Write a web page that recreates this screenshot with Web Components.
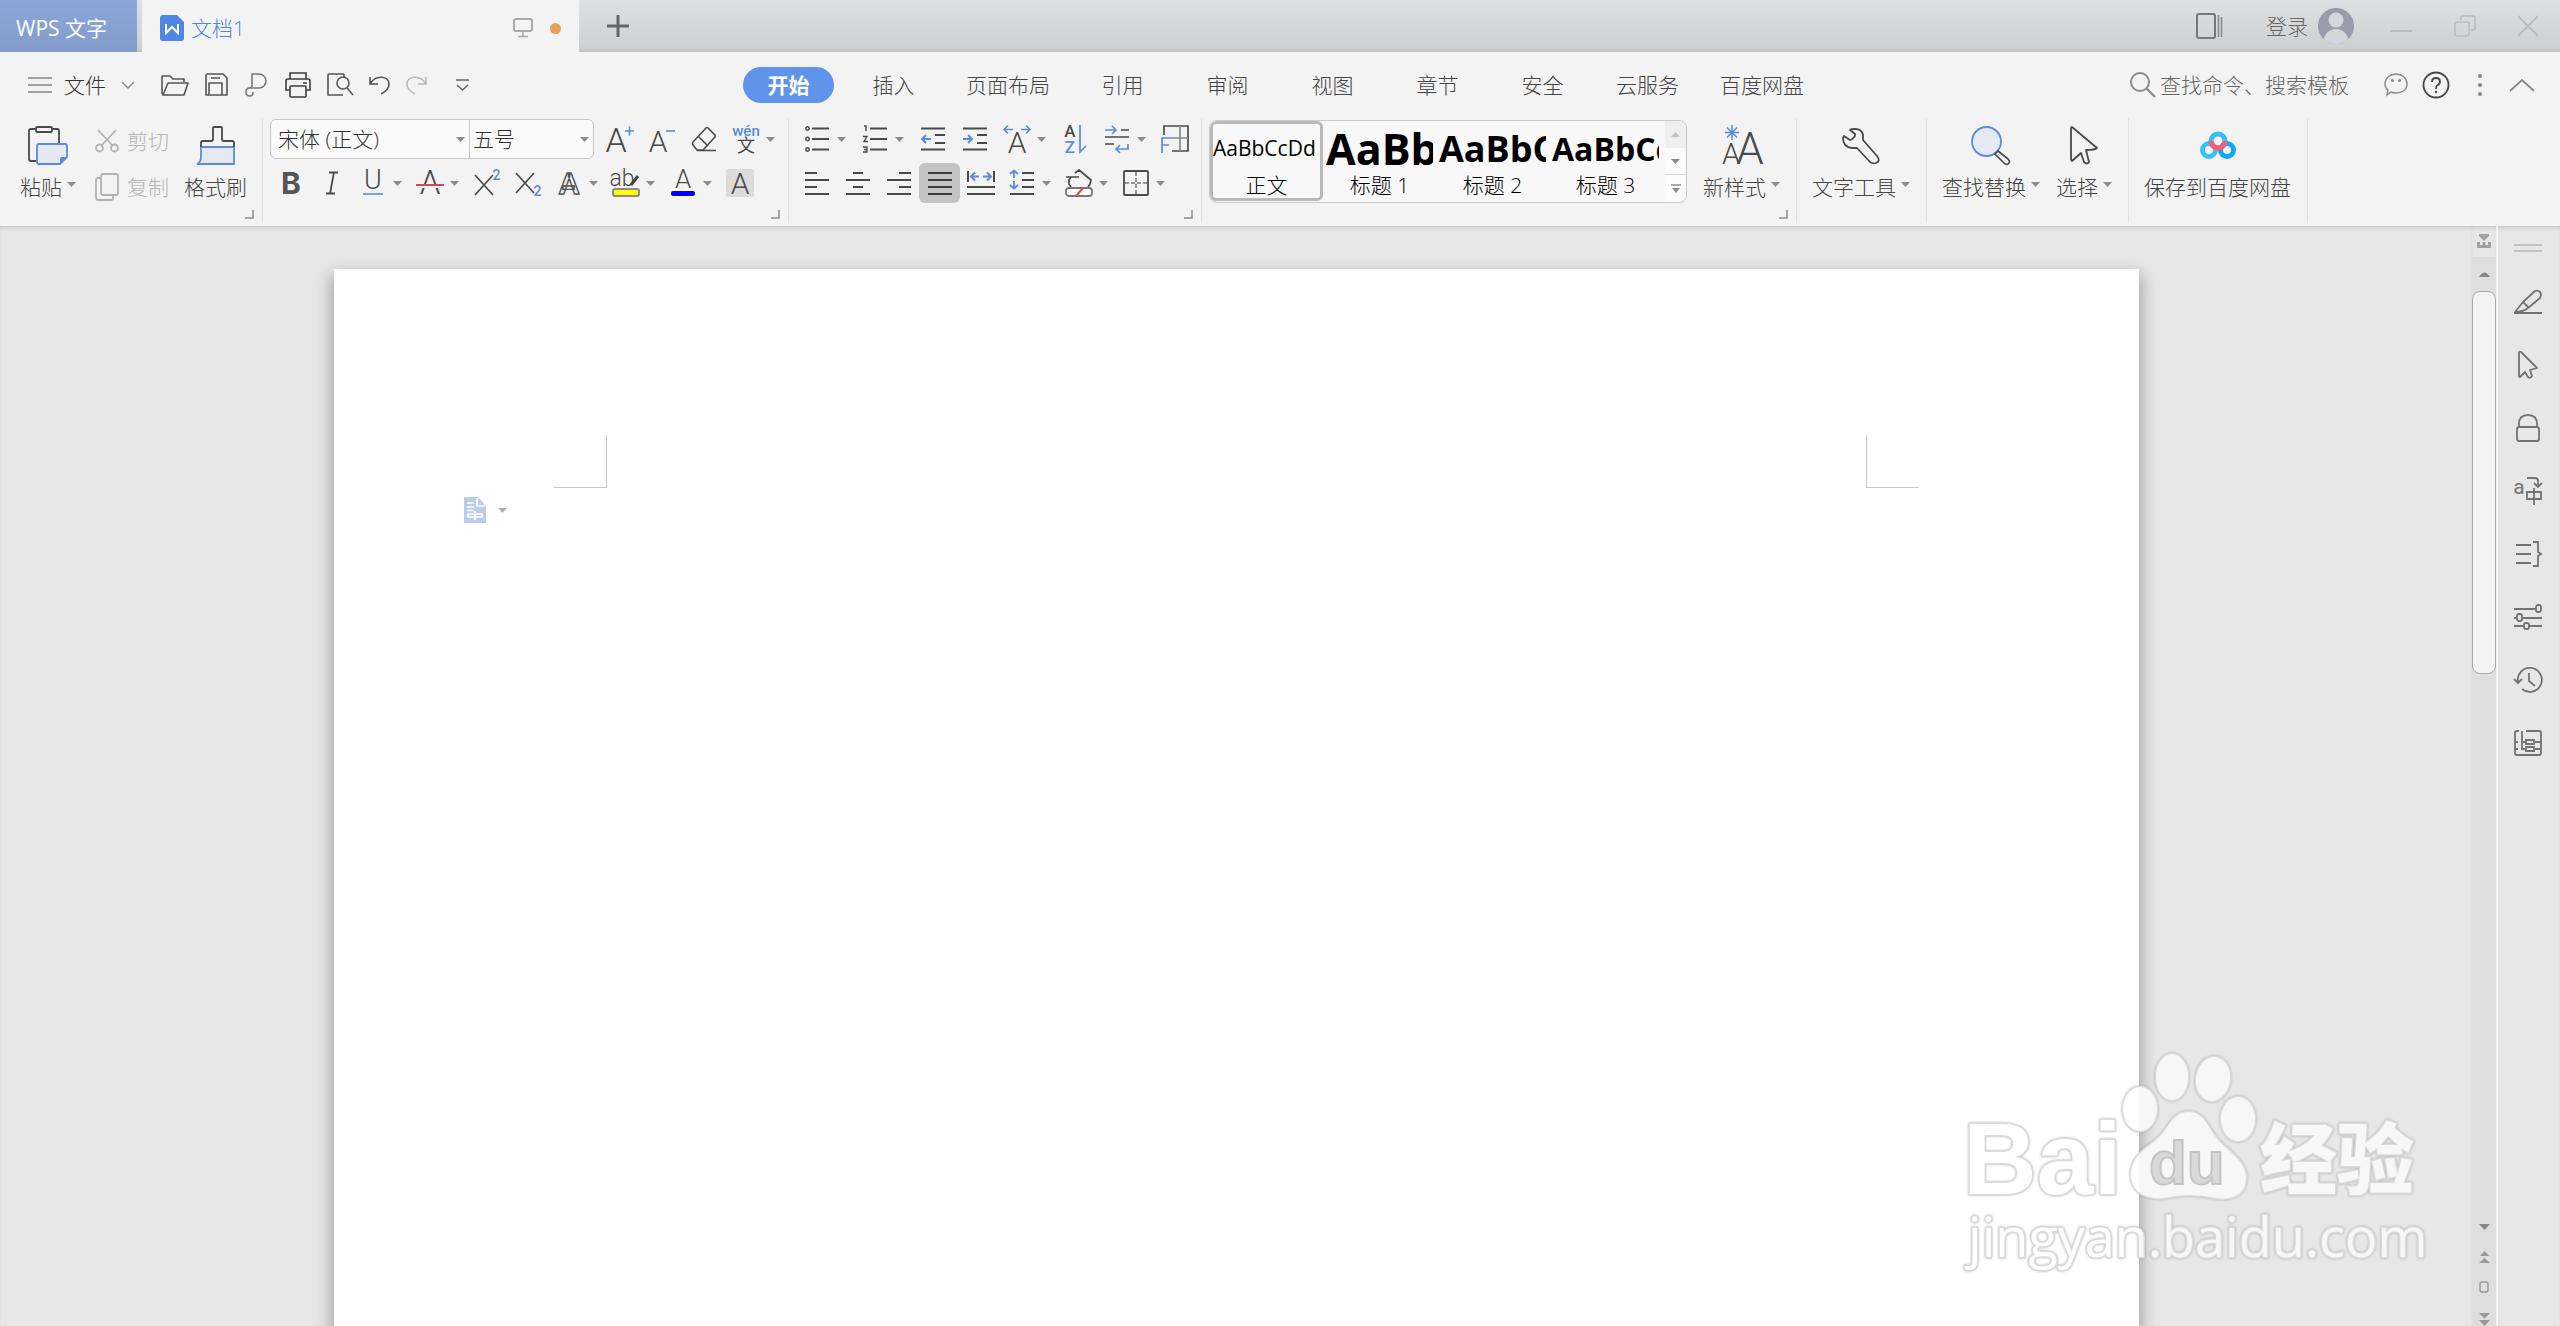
<!DOCTYPE html>
<html lang="zh-CN">
<head>
<meta charset="utf-8">
<title>文档1 - WPS 文字</title>
<style>
  html, body { margin: 0; height: 100%; }
  body {
    overflow: hidden;
    background: #e7e7e7;
    color: #444;
    font: 300 21px/28px "Open Sans", "Noto Sans CJK SC", sans-serif;
  }
</style>
</head>
<body>
<wps-app></wps-app>
<script>
const INK = '#4a4a4a', BLUE = '#5a8bdc';
const ln = (d, c = INK, w = 2, extra = '') => `<path d="${d}" fill="none" stroke="${c}" stroke-width="${w}" ${extra}/>`;
const tx = (x, y, size, s, c = INK, extra = '') => `<text x="${x}" y="${y}" font-size="${size}" fill="${c}" ${extra}>${s}</text>`;
const THIN = 'font-family="Roboto" font-weight="300" text-anchor="middle"';

/* name: [width, height, markup] */
const ICONS = {
  drop: [9, 5, '<path d="M0 0H9L4.500 5Z" fill="#8c8c8c"/>'],
  dropUp: [9, 5, '<path d="M0 5H9L4.500 0Z" fill="#c0c0c0"/>'],
  dropMore: [10, 9, '<path d="M0 1H10" stroke="#8c8c8c" stroke-width="1.500"/><path d="M1 4H9L5 9Z" fill="#8c8c8c"/>'],
  launcher: [9, 9, ln('M8 0V8H0', '#8c8c8c', 1.5)],
  wdoc: [24, 26, '<path d="M3 0H17L24 7V23Q24 26 21 26H3Q0 26 0 23V3Q0 0 3 0Z" fill="#4f86e4"/>' + ln('M6 9V18L12 12L18 18V9', '#fff', 2)],
  monitor: [20, 20, '<rect x="1" y="1" width="18" height="12" rx="2" fill="none" stroke="#aaa" stroke-width="2"/>' + ln('M10 13V18M5 18.500H15', '#aaa', 1.5)],
  plus: [22, 22, ln('M0 11H22M11 0V22', '#666', 3)],
  panels: [27, 26, '<rect x="1" y="1" width="18" height="24" rx="2" fill="none" stroke="#777" stroke-width="2"/>' + ln('M22.500 2V24M25.500 4V24', '#888', 1.5)],
  avatar: [36, 36, '<clipPath id="c"><circle cx="18" cy="18" r="18"/></clipPath><g clip-path="url(#c)"><rect width="36" height="36" fill="#9a9bac"/><circle cx="18" cy="12" r="7.500" fill="#d5d6dd"/><path d="M5 36C5 16 31 16 31 36Z" fill="#d5d6dd"/></g>'],
  min: [22, 22, ln('M0 16H22', '#bbb', 2)],
  restore: [22, 22, '<rect x="1" y="7" width="14" height="14" rx="2" fill="none" stroke="#bcbcbc" stroke-width="1.500"/>' + ln('M7 5V3Q7 1 9 1H19Q21 1 21 3V13Q21 15 19 15H17', '#bcbcbc', 1.5)],
  close: [20, 20, ln('M0 0L20 20M20 0L0 20', '#bbb', 1.8)],
  burger: [24, 16, ln('M0 1H24M0 8H24M0 15H24', '#888', 1.6)],
  chevDown: [12, 8, ln('M0 1L6 7L12 1', '#888', 1.4)],
  chevUp: [24, 13, ln('M0 12L12 1L24 12', '#888', 1.8)],
  open: [28, 24, ln('M1 21V3H9L12 6H23V9M1 22H23L27 10H7L2 22', '#555', 1.6, 'stroke-linejoin="round"')],
  save: [24, 24, ln('M2 1H18L22 5V22H1V2ZM4 22V10H17V22M6 5H15', '#555', 1.6, 'stroke-linejoin="round"')],
  link: [24, 26, ln('M7 15V2H14A7 7 0 0 1 14 16H7Q1 15 1 20Q1 24 5 24Q8 24 8 20', '#777', 1.6)],
  print: [26, 26, ln('M5 7V1H21V7M5 18H1V9Q1 7 3 7H23Q25 7 25 9V18H21M18 11H22', '#3c3c3c', 1.6) + '<rect x="5" y="14" width="16" height="11" rx="1" fill="#f3f3f3" stroke="#3c3c3c" stroke-width="1.600"/>'],
  preview: [26, 25, ln('M17 4V2Q17 1 16 1H2Q1 1 1 2V22H16', '#555', 1.6) + '<circle cx="16" cy="10" r="6" fill="none" stroke="#555" stroke-width="1.600"/>' + ln('M20 15L26 22', '#555', 1.6)],
  undo: [21, 20, ln('M1 2V9H9M1 9C7 -1 20 1 20 9Q20 15 12 19', '#555', 1.6)],
  redo: [21, 20, ln('M20 2V9H12M20 9C14 -1 1 1 1 9Q1 15 9 19', '#bbb', 1.6)],
  custom: [13, 12, ln('M0 1H13M1 6L6.500 11L12 6', '#666', 1.5)],
  search: [26, 26, '<circle cx="10" cy="10" r="9" fill="none" stroke="#8c8c8c" stroke-width="2"/>' + ln('M16 16L25 25', '#8c8c8c', 2.4)],
  chat: [24, 24, ln('M12 1C18 1 23 5 23 11C23 17 18 20 12 20Q9 20 7 19L3 22L4 17Q1 15 1 11C1 5 6 1 12 1Z', '#8a8a8a', 1.4) + '<circle cx="8.500" cy="7.500" r="1.600" fill="#8a8a8a"/><circle cx="15.500" cy="7.500" r="1.600" fill="#8a8a8a"/>'],
  help: [28, 28, '<circle cx="14" cy="14" r="12.500" fill="none" stroke="#444" stroke-width="1.800"/>' + ln('M10 11Q10 7 14 7Q18 7 18 11Q18 13 15 14.500Q14 15 14 18', '#444', 1.8) + '<circle cx="14" cy="21" r="1.200" fill="#444"/>'],
  dots: [4, 22, '<circle cx="2" cy="2" r="2" fill="#888"/><circle cx="2" cy="11" r="2" fill="#888"/><circle cx="2" cy="20" r="2" fill="#888"/>'],

  paste: [40, 39, ln('M8 3H3Q1 3 1 5V33Q1 35 3 35H9M24 3H29Q31 3 31 5V17', INK, 1.8) + '<rect x="8" y="1" width="16" height="5" rx="1" fill="#f3f3f3" stroke="#4a4a4a" stroke-width="1.800"/><path d="M11 18H37Q39 18 39 20V31L32 38H11Q9 38 9 36V20Q9 18 11 18Z" fill="#e4e9f3" stroke="#5a8bdc" stroke-width="1.800"/><path d="M32 38V33Q32 31 34 31H39Z" fill="#5a8bdc"/>'],
  cut: [24, 24, '<g fill="none" stroke="#b2b2b2" stroke-width="1.800"><path d="M3 1L18 17M21 1L6 17"/><circle cx="4.500" cy="19" r="3.500"/><circle cx="19.500" cy="19" r="3.500"/></g>'],
  copy: [24, 28, '<g fill="none" stroke="#b2b2b2" stroke-width="1.800"><rect x="6" y="1" width="17" height="21" rx="2"/><path d="M6 5H3Q1 5 1 7V25Q1 27 3 27H16Q18 27 18 25V22"/></g>'],
  brush: [38, 39, '<path d="M4 21H37V38H0Q4 36 4 31Z" fill="#e4e9f3" stroke="#5a8bdc" stroke-width="1.800"/>' + ln('M4 21V17Q4 15 6 15H14Q16 15 16 13V2Q16 1 17 1H24Q25 1 25 2V13Q25 15 27 15H35Q37 15 37 17V21', INK, 1.8)],

  grow: [30, 28, tx(11, 27, 34, 'A', INK, THIN) + ln('M20 6H29M24.500 1.500V10.500', BLUE, 1.6)],
  shrink: [28, 28, tx(10, 27, 30, 'A', INK, THIN) + ln('M18 6H27', BLUE, 1.6)],
  eraser: [26, 26, ln('M15 2Q16 1 17 2L24 9Q25 10 24 11L12 24H6L2 19Q1 17 2 16ZM7 10L17 20M6 24.500H25', INK, 1.6)],
  pinyin: [28, 30, tx(14, 12, 15, 'wén', BLUE, 'font-family="Roboto" font-weight="500" text-anchor="middle"') + tx(14, 28, 18, '文', INK, 'font-family="Noto Sans CJK SC" font-weight="400" text-anchor="middle"')],
  bold: [28, 28, tx(14, 25, 30, 'B', '#555', 'font-family="Inter" font-weight="700" text-anchor="middle"')],
  italic: [28, 28, ln('M11 3.500H20M8 24.500H17M16 3L12 25', INK, 1.8)],
  under: [28, 28, tx(14, 20, 27, 'U', INK, THIN) + ln('M4 25H24', BLUE, 1.6)],
  strike: [30, 28, tx(15, 25, 33, 'A', INK, THIN) + '<rect x="1" y="15" width="28" height="4" fill="#f3f3f3"/>' + ln('M1 16H29', '#d54a4f', 2)],
  sup: [28, 28, ln('M2 6L20 26M20 6L2 26', INK, 1.7) + tx(23.5, 11, 14, '2', BLUE, 'font-family="Roboto" font-weight="500" text-anchor="middle"')],
  sub: [28, 28, ln('M2 4L20 24M20 4L2 24', INK, 1.7) + tx(23.5, 27, 14, '2', BLUE, 'font-family="Roboto" font-weight="500" text-anchor="middle"')],
  outline: [28, 28, tx(14, 25, 30, 'A', '#f3f3f3', 'font-family="Roboto" font-weight="700" text-anchor="middle" stroke="#555" stroke-width="1.400"')],
  highlight: [30, 30, tx(11, 18, 23, 'ab', INK, 'font-family="Roboto" font-weight="300" text-anchor="middle"') + ln('M20 17L27 8', '#444', 3) + '<rect x="2" y="21" width="26" height="7" rx="2" fill="#ff0" stroke="#8a8a8a" stroke-width="2"/>'],
  fontcolor: [28, 28, tx(14, 19, 26, 'A', INK, THIN) + '<rect x="1" y="20" width="26" height="8" rx="2" fill="#fff"/><rect x="2" y="22" width="24" height="5" rx="2" fill="#00f"/>'],
  shade: [30, 30, '<rect x="1" y="1" width="28" height="28" rx="2" fill="#dcdcdc"/>' + tx(15, 26, 30, 'A', INK, THIN)],

  bullets: [24, 28, ln('M7 3.500H24M7 14H24M7 24.500H24') + '<g fill="none" stroke="#4a4a4a" stroke-width="1.500"><circle cx="2.500" cy="3.500" r="1.700"/><circle cx="2.500" cy="14" r="1.700"/><circle cx="2.500" cy="24.500" r="1.700"/></g>'],
  numbers: [24, 28, ln('M7 3.500H24M7 14H24M7 24.500H24') + ln('M1 1H3V6M0 11.500H4L1 16.500H5M0 22H4V27H0M1 24.500H4', INK, 1.4)],
  outdent: [24, 28, ln('M0 3.500H24M14 10H24M14 18H24M0 24.500H24') + ln('M1 14H10M5 10L1 14L5 18', BLUE)],
  indent: [24, 28, ln('M0 3.500H24M14 10H24M14 18H24M0 24.500H24') + ln('M0 14H9M5 10L9 14L5 18', BLUE)],
  scaling: [28, 30, tx(14, 29, 30, 'A', INK, THIN) + ln('M10 5.500H1M5 1.500L1 5.500L5 9.500M18 5.500H27M23 1.500L27 5.500L23 9.500', BLUE, 1.6)],
  sort: [24, 30, tx(7, 13, 17, 'A', INK, 'font-family="Roboto" font-weight="500" text-anchor="middle"') + tx(7, 29, 17, 'Z', BLUE, 'font-family="Roboto" font-weight="500" text-anchor="middle"') + ln('M17 1V28L23 22', BLUE, 1.7)],
  marks: [24, 30, ln('M0 13H24M16 6H24M0 20H9', INK, 1.6) + ln('M0 6H11M7 2L11 6L7 10M23 20V25H11M15 21L11 25L15 29', BLUE, 1.7)],
  frame: [28, 28, ln('M3 10V1H27V26H11', INK, 1.7) + ln('M19 1V26M10 13H27', '#888', 1.7) + ln('M1 28V13H10M1 20H8', BLUE, 1.7)],
  left: [24, 28, ln('M0 4H12M0 11H24M0 18H12M0 25H24')],
  center: [24, 28, ln('M7 4H17M0 11H24M7 18H17M0 25H24')],
  right: [24, 28, ln('M12 4H24M0 11H24M12 18H24M0 25H24')],
  justify: [24, 28, ln('M0 4H24M0 11H24M0 18H24M0 25H24', '#3a3a3a')],
  spread: [28, 28, ln('M1 2V13M27 2V13M0 18H28M0 25H28') + ln('M4 7.500H12M8 3.500L4 7.500L8 11.500M16 7.500H24M20 3.500L24 7.500L20 11.500', BLUE)],
  spacing: [24, 28, ln('M12 4H24M12 11H24M12 18H24M0 25H24') + ln('M4 1.500V9M0 5L4 1.500L8 5M4 12V19.500M0 16L4 19.500L8 16', BLUE, 1.8)],
  fill: [28, 30, ln('M1 9H14M10 5L14 2L26 12L25 16L23 19M6 9L4 12L4 16L6 19', INK, 1.7, 'stroke-linejoin="round"') + '<rect x="1" y="20" width="26" height="8" rx="3" fill="#fff" stroke="#777" stroke-width="1.800"/>' + ln('M11 28L18 20', '#e04a4a', 2)],
  border: [28, 28, '<rect x="2" y="2" width="24" height="24" rx="1" fill="none" stroke="#4a4a4a" stroke-width="1.800"/>' + ln('M14 3V25M3 14H25', '#777', 1.5, 'stroke-dasharray="4 2"')],

  newstyle: [42, 40, tx(10, 39, 29, 'A', INK, THIN) + tx(29, 39, 44, 'A', INK, THIN) + ln('M11 0V15M4 7.500H18M6 2.500L16 12.500M16 2.500L6 12.500', BLUE, 1.5)],
  wrench: [38, 38, ln('M8 4Q9 3 13 3Q20 3 21 9V14L35 30Q39 35 34 37Q31 38 28 36L15 22H10Q1 21 1 12L2 10L8 14Q10 14 13 10V8Z', INK, 1.8, 'stroke-linejoin="round"')],
  find: [40, 39, '<circle cx="15.500" cy="15.500" r="14.500" fill="#e4e9f3" stroke="#5a8bdc" stroke-width="1.800"/>' + ln('M24 28L27 25L37 33Q40 36 37 38Q35 39 33 37Z', INK, 1.7)],
  pointer: [28, 39, ln('M2 1L27 22Q25 24 16 24L19 36Q17 39 14 36L11 27L2 35Q1 34 1 33V2Z', INK, 1.8, 'stroke-linejoin="round"')],
  netdisk: [36, 39, '<g fill="none" stroke-width="5"><circle cx="18" cy="15" r="7" stroke="#38bdf8"/><circle cx="9" cy="24" r="6.500" stroke="#35c3fa"/><circle cx="27" cy="24" r="6.500" stroke="#12a6f8"/><path d="M11 15A7 7 0 0 0 25 15" stroke="#fb5a78"/></g>'],

  para: [22, 26, '<path d="M0 0H14L22 9V26H0Z" fill="#bacde9"/><path d="M13 1V9H21M3 6H10M3 10H10M3 13.500H10M4 17H18V20H4ZM11 14V23" fill="none" stroke="#fff" stroke-width="1.600"/>'],
  ruler: [14, 15, '<path d="M2 0H12V2L7 7L2 2Z" fill="#a2a2a2"/><path d="M0 8H3V11H5.500V8H8.500V11H11V8H14V13Q14 14 13 14H1Q0 14 0 13Z" fill="#a2a2a2"/>'],
  sUp: [11, 5, '<path d="M0 5Q5.500 -4 11 5Z" fill="#888"/>'],
  sDown: [11, 6, '<path d="M0 0H11L5.500 6Z" fill="#888"/>'],
  pgUp: [11, 12, '<path d="M5.500 0L10 5H1ZM5.500 7L11 12H0Z" fill="#999"/>'],
  browse: [10, 12, '<rect x="1" y="1" width="8" height="10" rx="2" fill="none" stroke="#999" stroke-width="1.500"/>'],
  pgDown: [11, 13, '<path d="M0 0H11L5.500 5.500ZM0 7H11L5.500 13Z" fill="#999"/>'],
  rHandle: [28, 8, ln('M0 1H28M0 7H28', '#c2c2c2', 2)],
  rPen: [28, 24, ln('M1 22L9 12L21 1Q24 0 26 2Q28 4 26 8L14 18Q9 22 1 22ZM9 12L15 18M0 23H28', '#737373', 1.8, 'stroke-linejoin="round"')],
  rPtr: [20, 28, ln('M1 2Q1 0 3 1L19 17L12 19L14 25Q12 28 10 26L7 21L2 26Q1 26 1 25Z', '#737373', 1.8, 'stroke-linejoin="round"')],
  rLock: [24, 28, '<rect x="1" y="13" width="22" height="14" rx="2" fill="none" stroke="#737373" stroke-width="1.800"/>' + ln('M3 13V10Q3 1 12 1Q21 1 21 10V13', '#737373', 1.8)],
  rTrans: [28, 28, tx(5, 17, 21, 'a', '#737373', 'font-family="Roboto" font-weight="400" text-anchor="middle"') + ln('M13 1H21Q24 1 24 4V9M20 6L24 10L28 6M13 15H27V22H13ZM20 11V28', '#737373', 1.8)],
  rList: [28, 26, ln('M2 4H17M2 13H17M2 22H17M19 1H24V11L27 13L24 15V25H19', '#737373', 1.8)],
  rSlide: [28, 26, ln('M0 5H21M0 14H3M8 14H28M0 22H10M15 22H28', '#737373', 1.8) + '<g fill="none" stroke="#737373" stroke-width="1.800"><rect x="22" y="1" width="5" height="7" rx="2"/><rect x="3" y="10" width="5" height="7" rx="2"/><rect x="10" y="19" width="5" height="6" rx="2"/></g>'],
  rHist: [28, 26, ln('M4 15A12 12 0 1 1 8 22M0 12L4 16L8 12M15 6V14L21 19', '#737373', 1.8)],
  rNav: [28, 26, ln('M5 1H3Q1 1 1 3V23Q1 25 3 25H25Q27 25 27 23V3Q27 1 25 1H12M8 1V19H11M11 12H8M12 10H20V14H12ZM12 17H20V21H12ZM1 12H4M1 19H4M21 12H27M21 19H27', '#737373', 1.8)]
};

const define = (name, html) => customElements.define(name, class extends HTMLElement {
  constructor() {
    super();
    this.attachShadow({ mode: 'open' });
  }
  connectedCallback() {
    if (this.shadowRoot.childNodes.length) return;
    const t = document.createElement('template');
    t.innerHTML = typeof html === 'function' ? html(this) : html;
    this.shadowRoot.append(t.content.cloneNode(true));
  }
});
const at = (el, n, d = '') => el.getAttribute(n) ?? d;
const RESET = 'button{appearance:none;border:0;background:none;padding:0;margin:0;font:inherit;color:inherit;cursor:pointer}';

define('ui-icon', el => {
  const [w, h, body] = ICONS[at(el, 'name')];
  return `<style>:host{display:block;flex:none}svg{display:block;overflow:visible}</style>
  <svg width="${w}" height="${h}" viewBox="0 0 ${w} ${h}" aria-hidden="true">${body}</svg>`;
});

/* plain icon button, sized by its icon */
define('icon-button', el => `<style>${RESET}
  :host{display:flex;flex:none}
  button{display:flex;align-items:center;justify-content:center;min-width:100%;min-height:100%}</style>
  <button aria-label="${at(el, 'label')}"><ui-icon name="${at(el, 'icon')}"></ui-icon></button>`);

/* ribbon tool: an icon slot with an optional drop-down arrow */
define('tool-button', el => `<style>${RESET}
  :host{display:flex;flex:none;height:40px}
  button{display:flex;align-items:center;height:40px}
  span{display:flex;width:41px;height:40px;align-items:center;justify-content:center}
  .arrow{width:16px;justify-content:flex-start}
  :host([pressed]) .slot{background:#c3c3c3;border-radius:6px}</style>
  <button aria-label="${at(el, 'label')}"><span class="slot"><ui-icon name="${at(el, 'icon')}"></ui-icon></span>${el.hasAttribute('drop') ? '<span class="arrow"><ui-icon name="drop"></ui-icon></span>' : ''}</button>`);

define('big-button', el => `<style>${RESET}
  :host{display:flex;flex:none}
  button{display:flex;flex-direction:column;align-items:center;padding-top:7px;height:90px;white-space:nowrap}
  .pic{display:flex;align-items:center;height:40px;margin-bottom:8px}
  .cap{display:flex;gap:5px}
  .cap ui-icon{margin-top:9px}</style>
  <button><span class="pic"><ui-icon name="${at(el, 'icon')}"></ui-icon></span><span class="cap"><slot></slot>${el.hasAttribute('drop') ? '<ui-icon name="drop"></ui-icon>' : ''}</span></button>`);

define('row-button', el => `<style>${RESET}
  :host{display:flex;flex:none;color:#b5b5b5}
  button{display:flex;align-items:center;gap:8px;height:40px;white-space:nowrap}</style>
  <button disabled><ui-icon name="${at(el, 'icon')}"></ui-icon><slot></slot></button>`);

define('ribbon-group', el => `<style>${RESET}
  :host{position:relative;display:flex;flex:none;align-items:flex-start;box-sizing:border-box;height:105px;border-right:1px solid #e1e1e1;padding:0 16px 0 15px;gap:16px}
  :host([tight]){padding:0 6px 0 7px}
  .launch{position:absolute;right:8px;bottom:4px}</style>
  <slot></slot>${el.hasAttribute('launcher') ? '<button class="launch" aria-label="更多设置"><ui-icon name="launcher"></ui-icon></button>' : ''}`);

define('tool-rows', `<style>
  :host{display:flex;flex-direction:column;gap:4px;padding-top:1px}
  ::slotted(div){display:flex;align-items:center}
  ::slotted(div[spaced]){gap:1px}</style><slot></slot>`);

define('font-picker', `<style>
  :host{display:flex;box-sizing:border-box;width:324px;height:40px;margin-right:4px;border:1px solid #c6c6c6;border-radius:6px;background:#fafafa;overflow:hidden}
  label{display:flex;align-items:center;padding-right:4px}
  .face{flex:1;border-right:1px solid #c6c6c6}
  .size{width:119px}
  select{appearance:none;flex:1;min-width:0;height:38px;border:0;outline:0;background:none;font:inherit;color:#333;padding:0 0 0 7px}
  .size select{padding-left:3px}</style>
  <label class="face"><select aria-label="字体"><option>宋体 (正文)</option></select><ui-icon name="drop"></ui-icon></label>
  <label class="size"><select aria-label="字号"><option>五号</option></select><ui-icon name="drop"></ui-icon></label>`);

define('style-cell', el => `<style>${RESET}
  :host{display:flex;flex:none;width:113px}
  button{display:flex;flex-direction:column;box-sizing:border-box;width:113px;height:80px;padding:0 3px;border:3px solid transparent;border-radius:6px;color:#000;overflow:hidden}
  :host([selected]) button{border-color:#b9b9b9}
  .demo{width:107px;margin-left:-3px;height:49px;line-height:49px;overflow:hidden;white-space:nowrap;text-align:left;font-family:"Open Sans",sans-serif;font-weight:400;font-size:${at(el, 'size', '21')}px}
  :host([strong]) .demo{font-weight:700}
  .cap{width:100%;line-height:24px;text-align:center}</style>
  <button><span class="demo">${at(el, 'demo')}</span><span class="cap"><slot></slot></span></button>`);

define('style-gallery', `<style>${RESET}
  :host{display:flex;flex:none;box-sizing:border-box;width:478px;height:83px;margin-top:2px;border:1px solid #c8c8c8;border-radius:8px;background:#f8f8f8;overflow:hidden}
  .cells{display:flex;flex:1}
  .nav{display:flex;flex-direction:column;width:21px}
  .nav button{display:flex;flex:1;align-items:center;justify-content:center;background:#fbfbfb}
  .nav button:first-child{background:#efefef}
  .nav button:last-child{border-top:1px solid #d4d9e0}</style>
  <div class="cells">
    <style-cell selected demo="AaBbCcDd">正文</style-cell>
    <style-cell strong size="43" demo="AaBb">标题 1</style-cell>
    <style-cell strong size="36" demo="AaBbC">标题 2</style-cell>
    <style-cell strong size="32" demo="AaBbCc">标题 3</style-cell>
  </div>
  <div class="nav">
    <button aria-label="上一行"><ui-icon name="dropUp"></ui-icon></button>
    <button aria-label="下一行"><ui-icon name="drop"></ui-icon></button>
    <button aria-label="展开"><ui-icon name="dropMore"></ui-icon></button>
  </div>`);

define('title-bar', `<style>${RESET}
  :host{display:flex;height:52px;background:linear-gradient(#dfe0e2,#cfd0d2 90%,#c2c3c5)}
  .home{width:137px;padding:4px 14px 0 0;background:linear-gradient(#8ca6d9,#839cca);color:#fff;font-weight:400;margin-right:5px}
  .doc{display:flex;align-items:center;width:437px;box-sizing:border-box;padding:4px 18px 0 18px;background:#f3f3f3;color:#4f86e4}
  .doc span{flex:1;text-align:left;padding-left:7px}
  .doc i{width:11px;height:11px;border-radius:50%;background:#e8a15c;margin-left:17px}
  .plus{margin:0 auto 0 28px}
  .right{display:flex;align-items:center}
  .login{display:flex;align-items:center;gap:10px;margin:0 36px 0 43px;color:#666}
  .wins{display:flex;align-items:center;gap:42px;margin-right:22px}</style>
  <button class="home">WPS 文字</button>
  <button class="doc"><ui-icon name="wdoc"></ui-icon><span>文档1</span><ui-icon name="monitor"></ui-icon><i></i></button>
  <icon-button class="plus" icon="plus" label="新建"></icon-button>
  <div class="right">
    <icon-button icon="panels" label="标签列表"></icon-button>
    <button class="login">登录<ui-icon name="avatar"></ui-icon></button>
    <div class="wins"><icon-button icon="min" label="最小化"></icon-button><icon-button icon="restore" label="还原"></icon-button><icon-button icon="close" label="关闭"></icon-button></div>
  </div>`);

define('menu-bar', `<style>${RESET}
  :host{display:flex;align-items:center;height:66px;background:#f3f3f3}
  .file{display:flex;align-items:center;gap:12px;margin-left:28px;color:#333}
  .file :last-child{margin-left:4px}
  .quick{display:flex;align-items:center;gap:16px;margin-left:27px}
  .quick :last-child{margin-left:13px}
  nav{display:flex;margin:0 auto 0 274px}
  nav button{min-width:105px;padding:0 20px;height:36px}
  nav .on{min-width:91px;margin-right:7px;border-radius:18px;background:#6093ea;color:#fff;font-weight:700}
  .find{display:flex;align-items:center;gap:4px;color:#666}
  input{width:210px;padding:0;border:0;outline:0;background:none;font:inherit;color:#666}
  input::placeholder{color:#666;opacity:1}
  .tail{display:flex;align-items:center;gap:14px;margin:0 26px 0 14px}
  .tail .dots{margin:0 14px}</style>
  <button class="file"><ui-icon name="burger"></ui-icon><span>文件</span><ui-icon name="chevDown"></ui-icon></button>
  <div class="quick">
    <icon-button icon="open" label="打开"></icon-button><icon-button icon="save" label="保存"></icon-button>
    <icon-button icon="link" label="输出为PDF"></icon-button><icon-button icon="print" label="打印"></icon-button>
    <icon-button icon="preview" label="打印预览"></icon-button><icon-button icon="undo" label="撤销"></icon-button>
    <icon-button icon="redo" label="恢复"></icon-button><icon-button icon="custom" label="自定义"></icon-button>
  </div>
  <nav>
    <button class="on">开始</button><button>插入</button><button>页面布局</button><button>引用</button><button>审阅</button>
    <button>视图</button><button>章节</button><button>安全</button><button>云服务</button><button>百度网盘</button>
  </nav>
  <label class="find"><ui-icon name="search"></ui-icon><input type="text" aria-label="搜索" placeholder="查找命令、搜索模板"></label>
  <div class="tail">
    <icon-button icon="chat" label="反馈"></icon-button><icon-button icon="help" label="帮助"></icon-button>
    <icon-button class="dots" icon="dots" label="更多"></icon-button><icon-button icon="chevUp" label="收起功能区"></icon-button>
  </div>`);

define('tool-ribbon', `<style>
  :host{display:flex;box-sizing:border-box;height:108px;background:#f3f3f3}
  .first{padding:0 15px 0 20px;gap:15px}
  .gallery{padding-left:7px}
  .pair{display:flex;flex-direction:column;gap:6px;padding:3px 0 0 4px}</style>
  <ribbon-group class="first" launcher>
    <big-button icon="paste" drop>粘贴</big-button>
    <div class="pair"><row-button icon="cut">剪切</row-button><row-button icon="copy">复制</row-button></div>
    <big-button icon="brush">格式刷</big-button>
  </ribbon-group>
  <ribbon-group tight launcher><tool-rows>
    <div spaced><font-picker></font-picker><tool-button icon="grow" label="增大字号"></tool-button><tool-button icon="shrink" label="减小字号"></tool-button><tool-button icon="eraser" label="清除格式"></tool-button><tool-button icon="pinyin" drop label="拼音指南"></tool-button></div>
    <div><tool-button icon="bold" label="加粗"></tool-button><tool-button icon="italic" label="倾斜"></tool-button><tool-button icon="under" drop label="下划线"></tool-button><tool-button icon="strike" drop label="删除线"></tool-button><tool-button icon="sup" label="上标"></tool-button><tool-button icon="sub" label="下标"></tool-button><tool-button icon="outline" drop label="文字效果"></tool-button><tool-button icon="highlight" drop label="突出显示"></tool-button><tool-button icon="fontcolor" drop label="字体颜色"></tool-button><tool-button icon="shade" label="字符底纹"></tool-button></div>
  </tool-rows></ribbon-group>
  <ribbon-group tight launcher><tool-rows>
    <div spaced><tool-button icon="bullets" drop label="项目符号"></tool-button><tool-button icon="numbers" drop label="编号"></tool-button><tool-button icon="outdent" label="减少缩进"></tool-button><tool-button icon="indent" label="增加缩进"></tool-button><tool-button icon="scaling" drop label="中文版式"></tool-button><tool-button icon="sort" label="排序"></tool-button><tool-button icon="marks" drop label="显示标记"></tool-button><tool-button icon="frame" label="制表位"></tool-button></div>
    <div><tool-button icon="left" label="左对齐"></tool-button><tool-button icon="center" label="居中"></tool-button><tool-button icon="right" label="右对齐"></tool-button><tool-button icon="justify" pressed label="两端对齐"></tool-button><tool-button icon="spread" label="分散对齐"></tool-button><tool-button icon="spacing" drop label="行距"></tool-button><tool-button icon="fill" drop label="底纹颜色"></tool-button><tool-button icon="border" drop label="边框"></tool-button></div>
  </tool-rows></ribbon-group>
  <ribbon-group class="gallery" launcher><style-gallery></style-gallery><big-button icon="newstyle" drop>新样式</big-button></ribbon-group>
  <ribbon-group><big-button icon="wrench" drop>文字工具</big-button></ribbon-group>
  <ribbon-group><big-button icon="find" drop>查找替换</big-button><big-button icon="pointer" drop>选择</big-button></ribbon-group>
  <ribbon-group><big-button icon="netdisk">保存到百度网盘</big-button></ribbon-group>`);

define('doc-canvas', `<style>${RESET}
  :host{display:flex;flex:1;justify-content:center;min-width:0;overflow:hidden;background:#e7e7e7;box-shadow:inset 0 4px 5px -3px rgba(0,0,0,.2)}
  main{box-sizing:border-box;width:1805px;max-width:100%;margin-top:43px;padding-top:166px;background:#fff;box-shadow:0 8px 16px 2px rgba(0,0,0,.32)}
  .marks{display:flex;justify-content:space-between;padding:0 220px}
  .marks i{box-sizing:border-box;width:53px;height:53px;border-bottom:1px solid #c8c8c8}
  .marks i:first-child{border-right:1px solid #c8c8c8}
  .marks i:last-child{border-left:1px solid #c8c8c8}
  .opts{display:flex;align-items:center;gap:12px;padding:9px 0 0 130px}</style>
  <main><div class="marks"><i></i><i></i></div>
  <button class="opts" aria-label="段落布局"><ui-icon name="para"></ui-icon><ui-icon name="drop" style="opacity:.7"></ui-icon></button></main>`);

define('scroll-strip', `<style>
  :host{display:flex;flex:none;flex-direction:column;width:24px;background:#dedede}
  icon-button{width:24px;height:30px}
  .ruler{height:31px;background:#e7e7e7;box-shadow:inset 0 4px 5px -3px rgba(0,0,0,.2)}
  .up{height:34px}
  .thumb{box-sizing:border-box;flex:0 1 383px;border:1px solid #aaa;border-radius:8px;background:#f3f3f3;margin-bottom:auto}
  .end{box-sizing:border-box;height:24px;padding-top:11px}</style>
  <icon-button class="ruler" icon="ruler" label="标尺"></icon-button>
  <icon-button class="up" icon="sUp" label="向上"></icon-button>
  <div class="thumb"></div>
  <icon-button icon="sDown" label="向下"></icon-button>
  <icon-button icon="pgUp" label="上一页"></icon-button>
  <icon-button icon="browse" label="选择浏览对象"></icon-button>
  <icon-button class="end" icon="pgDown" label="下一页"></icon-button>`);

define('side-rail', `<style>
  :host{display:flex;flex:none;flex-direction:column;align-items:center;width:60px;padding-right:2px;border-left:2px solid #f4f4f4;background:#e7e7e7;box-shadow:inset 0 4px 5px -3px rgba(0,0,0,.2)}
  icon-button{width:60px;height:63px}
  ui-icon{margin:18px 0}</style>
  <ui-icon name="rHandle"></ui-icon>
  <icon-button icon="rPen" label="样式"></icon-button><icon-button icon="rPtr" label="选择窗格"></icon-button>
  <icon-button icon="rLock" label="限制编辑"></icon-button><icon-button icon="rTrans" label="翻译"></icon-button>
  <icon-button icon="rList" label="大纲"></icon-button><icon-button icon="rSlide" label="属性"></icon-button>
  <icon-button icon="rHist" label="历史版本"></icon-button><icon-button icon="rNav" label="导航"></icon-button>`);

define('baidu-mark', `<style>
  :host{position:absolute;right:132px;bottom:48px;pointer-events:none}
  svg{display:block;overflow:visible}
  .art{paint-order:stroke;stroke:#dadada;stroke-width:3px;stroke-linejoin:round;filter:drop-shadow(0 0 1px rgba(0,0,0,.25))}</style>
  <svg width="470" height="228" viewBox="0 0 470 228">
    <defs><linearGradient id="tone" gradientUnits="userSpaceOnUse" x1="180" y1="0" x2="182" y2="0"><stop offset="0" stop-color="#fff"/><stop offset="1" stop-color="#f7f7f7"/></linearGradient></defs>
    <g class="art" fill="url(#tone)">
      <text x="5" y="144" font-family="Liberation Sans" font-weight="700" font-size="102">Bai</text>
      <text x="302" y="138" font-family="Noto Sans CJK SC" font-weight="900" font-size="77">经验</text>
      <text x="10" y="207" font-family="Open Sans" font-weight="400" font-size="54">jingyan.baidu.com</text>
      <ellipse cx="214" cy="27" rx="16" ry="23"/><ellipse cx="255" cy="29" rx="17" ry="22" transform="rotate(8 255 29)"/>
      <ellipse cx="182" cy="59" rx="17" ry="22"/><ellipse cx="280" cy="69" rx="17" ry="22"/>
      <path d="M231 62C240 62 246 68 251 77Q257 88 267 97C280 108 288 116 288 128C288 146 272 150 258 148Q231 142 206 148C186 150 173 140 173 125C173 112 180 104 192 95Q202 88 210 76C216 67 221 62 231 62Z"/>
    </g>
    <text x="191" y="134" font-family="Liberation Sans" font-weight="700" font-size="62" fill="#d9d9d9" stroke="#c4c4c4" stroke-width="2">du</text>
  </svg>`);

define('wps-app', `<style>
  :host{position:relative;display:flex;flex-direction:column;height:100vh;overflow:hidden}
  .work{display:flex;flex:1;min-height:0}</style>
  <title-bar></title-bar><menu-bar></menu-bar><tool-ribbon></tool-ribbon>
  <div class="work"><doc-canvas></doc-canvas><scroll-strip></scroll-strip><side-rail></side-rail></div>
  <baidu-mark></baidu-mark>`);
</script>
</body>
</html>
